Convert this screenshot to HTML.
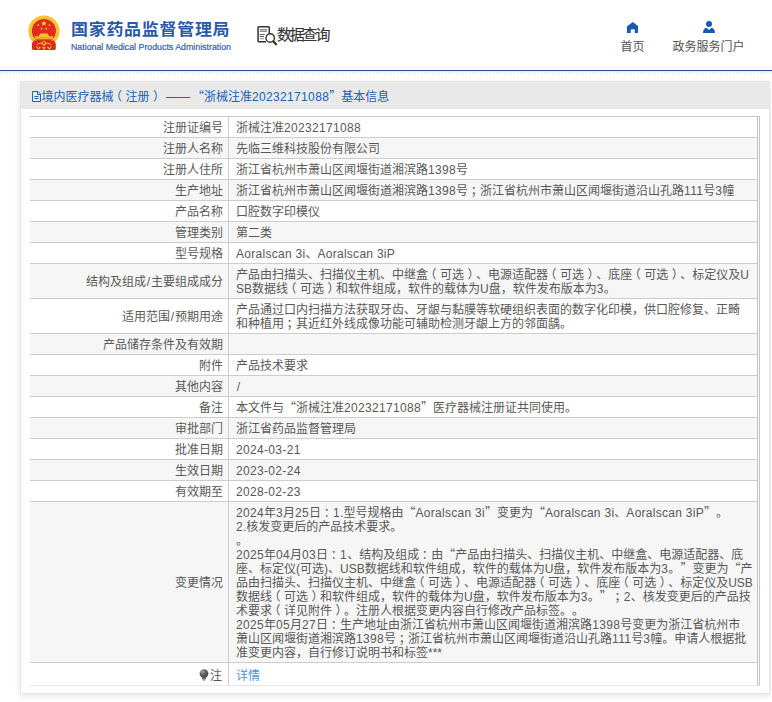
<!DOCTYPE html>
<html lang="zh-CN">
<head>
<meta charset="utf-8">
<title>国家药品监督管理局 数据查询</title>
<style>
*{box-sizing:border-box;margin:0;padding:0}
html,body{width:772px;height:702px;overflow:hidden;background:#fff}
body{text-spacing-trim:space-all;font-family:"Liberation Sans","Noto Sans CJK SC",sans-serif;font-size:12px;color:#585858;position:relative}
.q{font-family:"Noto Sans CJK SC",sans-serif;line-height:0}
.n{letter-spacing:.33px}.e{letter-spacing:.28px}.sl{padding:0 .8px}.pl,.pr,.pc{position:relative}.pl{left:-3.500px}.pr{left:3.500px}.pc{left:2.600px}
.hdr{position:absolute;left:0;top:0;width:772px;height:70px;background:#fff}
.line{position:absolute;left:0;top:70px;width:772px;height:1px;background:#2a5388}
.line2{position:absolute;left:0;top:71px;width:772px;height:1px;background:#e2f3fb}
.hatch{position:absolute;left:0;top:72px;width:772px;height:2px}
.emblem{position:absolute;left:27px;top:14px;width:36px;height:38px}
.t1{position:absolute;left:71px;top:17px;font-size:17px;line-height:26px;font-weight:bold;color:#285aa8;letter-spacing:.7px;white-space:nowrap;transform:scaleY(.96);transform-origin:0 50%}
.t2{position:absolute;left:70.500px;top:41px;font-size:9px;line-height:11px;color:#3560a8;-webkit-text-stroke:.2px #3560a8;white-space:nowrap;transform:scale(.978,1.1);transform-origin:0 0}
.sj{position:absolute;left:277px;top:24.500px;font-size:15px;line-height:20px;color:#333;-webkit-text-stroke:.15px #333;letter-spacing:-2.2px;white-space:nowrap}
.sjico{position:absolute;left:256px;top:25px;width:22px;height:21px}
.nav{position:absolute;top:39px;font-size:12px;line-height:16px;color:#525252;white-space:nowrap;text-align:center}
.navico{position:absolute}
.panel{position:absolute;left:20px;top:81px;width:750px;height:613px;background:#fff;border:1px solid #e6e6e6;box-shadow:0 2px 6px rgba(0,0,0,.11)}
.ph{position:absolute;left:0;top:0;width:748px;height:27px;background:#e9e9e9;color:#2160b4;line-height:14px;padding:8px 0 0 10.500px;white-space:nowrap}
.ph svg{vertical-align:-1px;margin-right:1px}
.sp{display:inline-block;width:4.500px}.sp1{display:inline-block;width:2px}
.sp2{display:inline-block;width:0}
table{position:absolute;left:9px;top:35px;width:728px;border-collapse:separate;border-spacing:0;table-layout:fixed}
td{border-bottom:1px solid #cdcdcd;padding:4px 5px 2px 7px;line-height:14px;height:21px;vertical-align:middle;white-space:nowrap;overflow:hidden}
td.l{width:199px;text-align:right;border-right:1px solid #cdcdcd}
td.v{text-align:left;border-right:1px solid #c4c4c4}
.rb{position:absolute;left:9px;top:34px;width:730px;height:570px;border-top:1px solid #c8c8c8;border-right:1px solid #c4c4c4}
tr.g td{background:#f6f6f6}
td.last{border-bottom-color:#e6e6e6;height:23px;vertical-align:top;padding-top:6px;padding-bottom:0}td.l.last{padding-right:6px}
.bulb{vertical-align:-1px;margin-right:1px}
a{color:#4a92e0;text-decoration:none}
</style>
</head>
<body>
<div class="hdr">
 <svg class="emblem" width="36" height="38" viewBox="27 14 36 38">
  <circle cx="43.900" cy="31.100" r="15.600" fill="#f6c230"/>
  <circle cx="43.900" cy="31.100" r="12" fill="#e02b20"/>
  <path d="M34 40.500L53.800 40.500L55.800 43.500V48.300Q55.800 50 54.200 50H33.500Q31.900 50 31.900 48.300V43.500Z" fill="#d92a1e"/>
  <path d="M43.900 20.800l.75 1.750 1.900.15-1.450 1.250.45 1.850-1.650-1-1.650 1 .45-1.850-1.450-1.250 1.900-.15z" fill="#f8d43c"/>
  <circle cx="38.300" cy="25.100" r=".85" fill="#f8d43c"/><circle cx="49.500" cy="25.100" r=".85" fill="#f8d43c"/>
  <circle cx="41.600" cy="28.700" r=".85" fill="#f8d43c"/><circle cx="46.300" cy="28.700" r=".85" fill="#f8d43c"/>
  <path d="M39 36.300v-1.500h1v-1.200h7.800v1.200h1v1.500h4.400v2.900H34.700v-2.900z" fill="#f6c230"/>
  <path d="M35.500 37.700h16.800" stroke="#e8772a" stroke-width=".6"/>
  <circle cx="43.900" cy="43.200" r="1.900" fill="none" stroke="#f6c230" stroke-width="1"/>
  <path d="M36.500 45q3.700-3.400 7.400-.4q3.700-3 7.400.4" fill="none" stroke="#f6c230" stroke-width="1"/>
  <path d="M36.600 46.700l1.900 2.300 1.900-2.300M47.500 46.700l1.900 2.300 1.900-2.300M42.600 46.900l1.300 2 1.300-2" fill="none" stroke="#f6c230" stroke-width="1.100"/>
 </svg>
 <div class="t1">国家药品监督管理局</div>
 <div class="t2">National Medical Products Administration</div>
 <svg class="sjico" viewBox="0 0 22 21" fill="none" stroke="#333">
  <path d="M10 16.650H2.800Q2.050 16.650 2.050 15.900V2.500Q2.050 1.750 2.800 1.750H12.500Q13.250 1.750 13.250 2.500V8.500" stroke-width="1.500"/>
  <path d="M3.700 4.700h7.300M3.700 6.300h7.300" stroke-width="1.300" stroke="#8a8a8a"/>
  <path d="M3.700 9.500h5M3.700 11.500h4.300" stroke-width="1.100" stroke="#555"/>
  <path d="M3.700 13.700h4.300" stroke-width="1.100" stroke="#999"/>
  <circle cx="14.200" cy="13" r="4.200" stroke-width="1.400" fill="#fff"/>
  <path d="M17.300 16.300l2.700 2.900" stroke-width="2.300" stroke-linecap="round"/>
 </svg>
 <div class="sj">数据查询</div>
 <svg class="navico" style="left:626.500px;top:21.800px" width="11.500" height="11" viewBox="0 0 11.500 11"><path d="M5.750 0L0 4.500V11H3.700V8.100Q3.700 7.200 4.600 7.200H6.900Q7.800 7.200 7.800 8.100V11H11.500V4.500z" fill="#1558b8"/></svg>
 <div class="nav" style="left:620px;width:25px">首页</div>
 <svg class="navico" style="left:703px;top:21px" width="12" height="12" viewBox="0 0 12 12"><circle cx="6" cy="3" r="3" fill="#1558b8"/><path d="M0 12c0-3.200 1.600-5 3.600-5.200L6 9l2.400-2.200C10.400 7 12 8.800 12 12z" fill="#1558b8"/></svg>
 <div class="nav" style="left:672px;width:73px">政务服务门户</div>
</div>
<div class="line"></div><div class="line2"></div>
<svg class="hatch" width="772" height="2"><defs><pattern id="hp" width="3" height="2" patternUnits="userSpaceOnUse"><rect x="1" y="0" width="1" height="1" fill="#d3d9f5"/><rect x="0" y="1" width="1" height="1" fill="#ececf4"/></pattern></defs><rect width="772" height="2" fill="url(#hp)"/></svg>
<div class="panel">
 <div class="ph"><svg width="9" height="11" viewBox="0 0 9 11" fill="none" stroke="#2160b4" stroke-width="1"><path d="M.5.500h5.500l2.500 2.500v7.500h-8z"/><path d="M5.500.500v3h3M2.500 5.500h4M2.500 7.500h4"/></svg>境内医疗器械<span class="pl">（</span>注册<span class="pr">）</span><span class="sp"></span>——<span class="sp1"></span><span class="q">“</span>浙械注准<span class="n">20232171088</span><span class="q">”</span><span class="sp2"></span>基本信息</div>
 <table cellspacing="0" cellpadding="0">
  <tr><td class="l">注册证编号</td><td class="v">浙械注准<span class="n">20232171088</span></td></tr>
  <tr class="g"><td class="l">注册人名称</td><td class="v">先临三维科技股份有限公司</td></tr>
  <tr><td class="l">注册人住所</td><td class="v">浙江省杭州市萧山区闻堰街道湘滨路<span class="n">1398</span>号</td></tr>
  <tr class="g"><td class="l">生产地址</td><td class="v">浙江省杭州市萧山区闻堰街道湘滨路<span class="n">1398</span>号<span class="pc">；</span>浙江省杭州市萧山区闻堰街道沿山孔路<span class="n">111</span>号<span class="n">3</span>幢</td></tr>
  <tr><td class="l">产品名称</td><td class="v">口腔数字印模仪</td></tr>
  <tr class="g"><td class="l">管理类别</td><td class="v">第二类</td></tr>
  <tr><td class="l">型号规格</td><td class="v"><span class="e">Aoralscan 3i</span>、<span class="e">Aoralscan 3iP</span></td></tr>
  <tr class="g"><td class="l">结构及组成<span class="sl">/</span>主要组成成分</td><td class="v">产品由扫描头、扫描仪主机、中继盒<span class="pl">（</span>可选<span class="pr">）</span>、电源适配器<span class="pl">（</span>可选<span class="pr">）</span>、底座<span class="pl">（</span>可选<span class="pr">）</span>、标定仪及U<br>SB数据线<span class="pl">（</span>可选<span class="pr">）</span>和软件组成，软件的载体为U盘，软件发布版本为<span class="n">3</span>。</td></tr>
  <tr><td class="l">适用范围<span class="sl">/</span>预期用途</td><td class="v">产品通过口内扫描方法获取牙齿、牙龈与黏膜等软硬组织表面的数字化印模，供口腔修复、正畸<br>和种植用<span class="pc">；</span>其近红外线成像功能可辅助检测牙龈上方的邻面龋。</td></tr>
  <tr class="g"><td class="l">产品储存条件及有效期</td><td class="v"></td></tr>
  <tr><td class="l">附件</td><td class="v">产品技术要求</td></tr>
  <tr class="g"><td class="l">其他内容</td><td class="v"><span class="sl">/</span></td></tr>
  <tr><td class="l">备注</td><td class="v">本文件与<span class="q">“</span>浙械注准<span class="n">20232171088</span><span class="q">”</span>医疗器械注册证共同使用。</td></tr>
  <tr class="g"><td class="l">审批部门</td><td class="v">浙江省药品监督管理局</td></tr>
  <tr><td class="l">批准日期</td><td class="v"><span class="n">2024-03-21</span></td></tr>
  <tr class="g"><td class="l">生效日期</td><td class="v"><span class="n">2023-02-24</span></td></tr>
  <tr><td class="l">有效期至</td><td class="v"><span class="n">2028-02-23</span></td></tr>
  <tr class="g"><td class="l">变更情况</td><td class="v"><span class="n">2024</span>年<span class="n">3</span>月<span class="n">25</span>日<span class="pc">：</span><span class="n">1</span>.型号规格由<span class="q">“</span><span class="e">Aoralscan 3i</span><span class="q">”</span>变更为<span class="q">“</span><span class="e">Aoralscan 3i</span>、<span class="e">Aoralscan 3iP</span><span class="q">”</span>。<br><span class="n">2</span>.核发变更后的产品技术要求。<br>。<br><span class="n">2025</span>年<span class="n">04</span>月<span class="n">03</span>日<span class="pc">：</span><span class="n">1</span>、结构及组成<span class="pc">：</span>由<span class="q">“</span>产品由扫描头、扫描仪主机、中继盒、电源适配器、底<br>座、标定仪(可选)、USB数据线和软件组成，软件的载体为U盘，软件发布版本为<span class="n">3</span>。<span class="q">”</span>变更为<span class="q">“</span>产<br>品由扫描头、扫描仪主机、中继盒<span class="pl">（</span>可选<span class="pr">）</span>、电源适配器<span class="pl">（</span>可选<span class="pr">）</span>、底座<span class="pl">（</span>可选<span class="pr">）</span>、标定仪及USB<br>数据线<span class="pl">（</span>可选<span class="pr">）</span>和软件组成，软件的载体为U盘，软件发布版本为<span class="n">3</span>。<span class="q">”</span><span class="pc">；</span><span class="n">2</span>、核发变更后的产品技<br>术要求<span class="pl">（</span>详见附件<span class="pr">）</span>。注册人根据变更内容自行修改产品标签。。<br><span class="n">2025</span>年<span class="n">05</span>月<span class="n">27</span>日<span class="pc">：</span>生产地址由浙江省杭州市萧山区闻堰街道湘滨路<span class="n">1398</span>号变更为浙江省杭州市<br>萧山区闻堰街道湘滨路<span class="n">1398</span>号<span class="pc">；</span>浙江省杭州市萧山区闻堰街道沿山孔路<span class="n">111</span>号<span class="n">3</span>幢。申请人根据批<br>准变更内容，自行修订说明书和标签***</td></tr>
  <tr><td class="l last"><svg class="bulb" width="10" height="12" viewBox="0 0 10 12"><defs><radialGradient id="bg" cx=".32" cy=".28" r=".75"><stop offset="0" stop-color="#a9a7b4"/><stop offset=".45" stop-color="#66636e"/><stop offset="1" stop-color="#48454e"/></radialGradient></defs><circle cx="5" cy="4.600" r="4.400" fill="url(#bg)"/><path d="M3.200 8.500h3.600v2h-3.600z" fill="#5c5963"/><path d="M3.700 11.200h2.600" stroke="#8e8c96" stroke-width=".9"/></svg>注</td><td class="v last"><a>详情</a></td></tr>
 </table>
 <div class="rb"></div>
</div>
</body>
</html>
